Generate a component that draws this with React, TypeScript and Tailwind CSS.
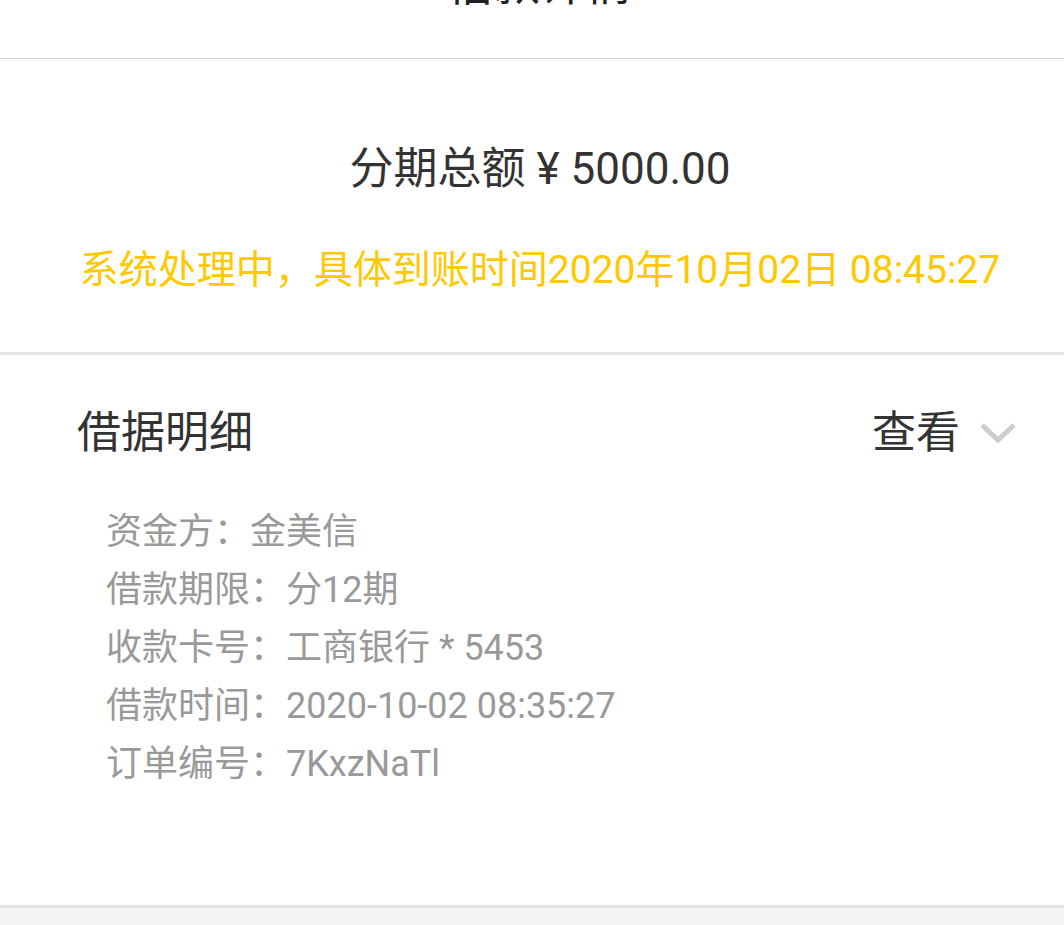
import React from "react";

const DETAILS = [
  { label: "资金方：", value: "金美信" },
  { label: "借款期限：", value: "分12期" },
  { label: "收款卡号：", value: "工商银行 * 5453" },
  { label: "借款时间：", value: "2020-10-02 08:35:27" },
  { label: "订单编号：", value: "7KxzNaTl" },
];

const font = {
  fontFamily: 'Roboto, "Noto Sans CJK SC", "Noto Sans", sans-serif',
};

export default function App() {
  return (
    <div className="min-h-[925px] w-full bg-[#f4f4f4]" style={font}>
      {/* top bar, title mostly scrolled off */}
      <div className="h-[59px] overflow-hidden border-b border-[#d6d6d6] bg-white pl-[16px]">
        <div className="-mt-[39px] text-center text-[46px] leading-[46px] text-[#222]">
          借款详情
        </div>
      </div>

      {/* amount */}
      <div className="border-b-[3px] border-[#e6e6e6] bg-white pt-[80px] pb-[57px] pl-[16px] text-center">
        <div className="text-[44px] leading-[60px] text-[#333]">
          分期总额 ¥ 5000.00
        </div>
        <div className="mt-[46px] text-[39px] leading-[50px] text-[#ffc800]">
          系统处理中，具体到账时间2020年10月02日 08:45:27
        </div>
      </div>

      {/* details */}
      <div className="border-b-[3px] border-[#e3e3e3] bg-white pt-[48px] pb-[112px]">
        <div className="flex h-[60px] items-center justify-between pl-[77px] pr-[48px]">
          <div className="text-[44px] text-[#333]">借据明细</div>
          <div className="flex items-center gap-[20px]">
            <span className="text-[44px] text-[#333]">查看</span>
            <svg width="36" height="22" viewBox="0 0 36 22" fill="none">
              <polyline
                points="2,3 18,18 34,3"
                stroke="#cccccc"
                strokeWidth="5"
                strokeLinecap="butt"
              />
            </svg>
          </div>
        </div>
        <div className="mt-[40px] pl-[106px]">
          {DETAILS.map((d) => (
            <div key={d.label} className="text-[36px] leading-[58px] text-[#999]">
              {d.label}
              {d.value}
            </div>
          ))}
        </div>
      </div>
    </div>
  );
}
